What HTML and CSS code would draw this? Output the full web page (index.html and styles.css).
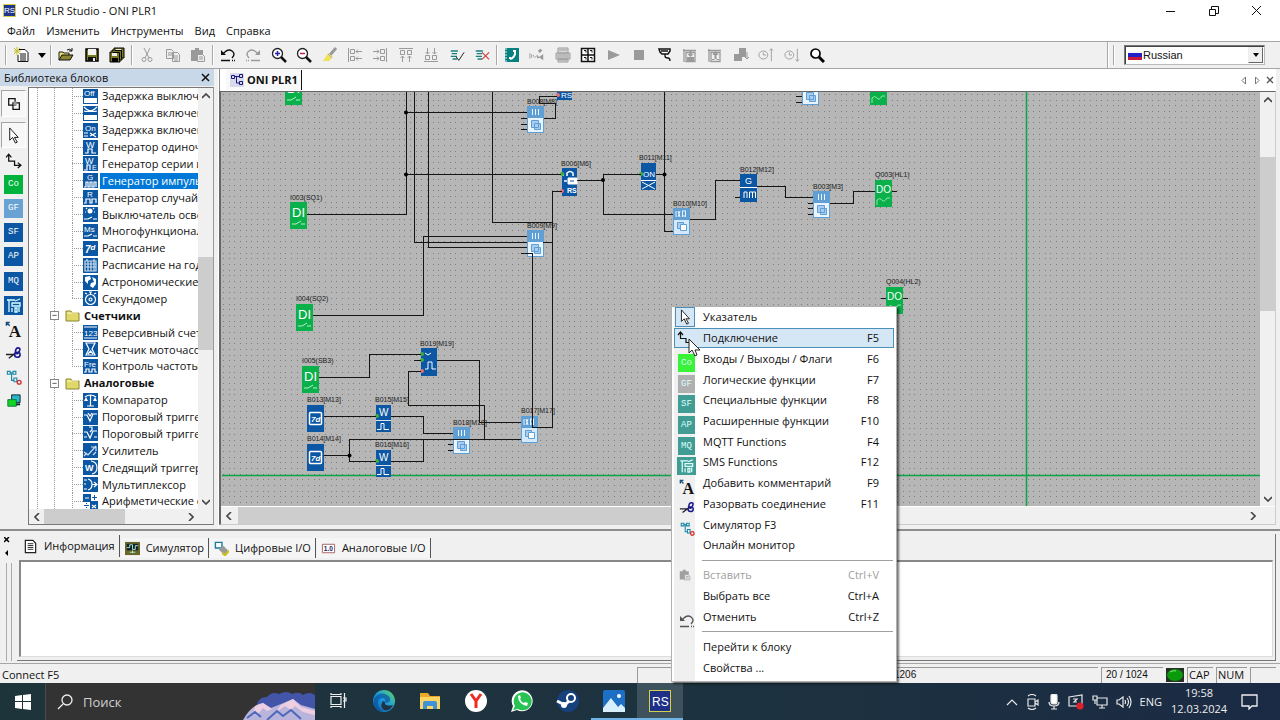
FILE: index.html
```html
<!DOCTYPE html>
<html lang="ru">
<head>
<meta charset="utf-8">
<title>ONI PLR Studio - ONI PLR1</title>
<link rel="stylesheet" href="styles.css">
</head>
<body>
<svg class="defs" aria-hidden="true">
  <defs>
    <pattern id="grid" width="17" height="17" patternUnits="userSpaceOnUse">
      <path d="M2 2h1v1h-1zM8 2h1v1h-1zM13 2h1v1h-1zM2 8h1v1h-1zM8 8h1v1h-1zM13 8h1v1h-1zM2 13h1v1h-1zM8 13h1v1h-1zM13 13h1v1h-1z" fill="#7c7c7c"/>
    </pattern>
    <linearGradient id="edge" x1="0" y1="1" x2="1" y2="0"><stop offset="0" stop-color="#0c59a4"/><stop offset=".5" stop-color="#1a9be0"/><stop offset="1" stop-color="#63d85c"/></linearGradient>
    <symbol id="b-di" viewBox="0 0 17 27"><rect width="17" height="27" fill="#0ab04a"/><text x="2" y="15" font-size="13" fill="#fff">DI</text><path d="M2 22h4l5-3M11 22h4" stroke="#b9f0c8" fill="none"/></symbol>
    <symbol id="b-do" viewBox="0 0 17 27"><rect width="17" height="27" fill="#0ab04a"/><text x="1" y="13" font-size="10" fill="#fff">DO</text><path d="M2 25v-5q3-3 5 0t5-2h3" stroke="#8fe6a8" fill="none"/></symbol>
    <symbol id="b-and" viewBox="0 0 17 27"><rect width="17" height="27" fill="#5f9fd4"/><path d="M5.500 3v6M8.500 3v6M11.500 3v6" stroke="#e8f4ff"/><rect x="1" y="12" width="15" height="14" fill="#eaf4ff"/><path d="M4.500 14.500h7v7h-7zM7.500 17.500h6v6h-6z" fill="#a9cdf2" stroke="#5f9fd4"/></symbol>
    <symbol id="b-xor" viewBox="0 0 17 27"><rect width="17" height="27" fill="#5f9fd4"/><path d="M3 3v6M5 3l2 6M7 3l-2 6M9.500 3v6M12.500 3v6M9 3h4M9 8h4" stroke="#e8f4ff" fill="none"/><rect x="1" y="12" width="15" height="14" fill="#d5e9fd"/><path d="M4.500 14.500h6v6h-6z" fill="#a9cdf2" stroke="#5f9fd4"/><path d="M7.500 16.500h6v6h-6z" fill="#fff" stroke="#5f9fd4"/></symbol>
    <symbol id="b-day" viewBox="0 0 17 27"><rect width="17" height="27" fill="#0b57a4"/><rect x="2.500" y="7.500" width="12" height="12" rx="1" fill="none" stroke="#fff" stroke-width="1.500"/><text x="4" y="17" font-size="8" font-style="italic" font-weight="bold" fill="#fff">7d</text></symbol>
    <symbol id="b-pulse" viewBox="0 0 15 27"><rect width="15" height="27" fill="#0b57a4"/><text x="3" y="11" font-size="10" fill="#fff">W</text><path d="M0 15.500h15" stroke="#d9e6f2"/><path d="M1 24.500h4v-6h3v6h5" stroke="#fff" fill="none"/></symbol>

    <symbol id="t-new" viewBox="0 0 16 16"><path d="M5 2.500h6l3 3v9H4V8" fill="#fff" stroke="#111"/><path d="M6 7h6M6 9h6M6 11h6M6 13h6" stroke="#111"/><path d="M0 1l6 6M6 1L0 7M3 0v8M0 4h7" stroke="#c5c030"/></symbol>
    <symbol id="t-open" viewBox="0 0 16 16"><path d="M1 13V5h4l1 1h5v2" fill="#e6dd70" stroke="#222"/><path d="M1 13l3-5h11l-3 5z" fill="#8b8530" stroke="#111"/><path d="M9 3q3-2 5 1M14 1v3h-3" fill="none" stroke="#111"/></symbol>
    <symbol id="t-save" viewBox="0 0 16 16"><path d="M2 2h12v12H2z" fill="#7a7a22" stroke="#000" stroke-width="1.500"/><path d="M4 2h8v6H4z" fill="#f3f3f3"/><path d="M4 10h8v4H4z" fill="#111"/><path d="M9 11h2v3H9z" fill="#eee"/></symbol>
    <symbol id="t-all" viewBox="0 0 16 16"><path d="M5 1h10v10h-2v2h-2v2H1V5h2V3h2z" fill="#7a7a22" stroke="#000"/><path d="M5.500 3.500h7v8M3.500 5.500h7v8" stroke="#000" fill="none"/><path d="M3 6h5v3H3zM7 2h5v1H7z" fill="#eee"/><path d="M3 11h6v4H3z"/></symbol>
    <symbol id="t-cut" viewBox="0 0 16 16"><path d="M5 1l5 10M11 1L6 11" stroke="currentColor" fill="none"/><circle cx="5" cy="12.500" r="2" fill="none" stroke="currentColor"/><circle cx="11" cy="12.500" r="2" fill="none" stroke="currentColor"/></symbol>
    <symbol id="t-copy" viewBox="0 0 16 16"><path d="M1.500 2.500h5l2 2v7h-7zM7.500 5.500h5l2 2v7h-7z" fill="#eee" stroke="currentColor"/><path d="M3 6h4M3 8h4M9 9h4M9 11h4M9 13h4" stroke="currentColor"/></symbol>
    <symbol id="t-paste" viewBox="0 0 16 16"><path d="M1 3h12v11H1z" fill="currentColor"/><path d="M5 1h4v3H5z" fill="currentColor"/><path d="M7.500 7.500h5l2 2v5h-7z" fill="#eee" stroke="currentColor"/><path d="M9 10h4M9 12h4" stroke="currentColor"/></symbol>
    <symbol id="t-undo" viewBox="0 0 16 16"><path d="M3 7q5-6 9-3 4 3 0 7" fill="none" stroke="currentColor" stroke-width="1.400"/><path d="M1 3v5h5z" fill="currentColor"/><path d="M1 13.500h9M12 13.500h1M14 13.500h1" stroke="currentColor" stroke-width="1.500"/></symbol>
    <symbol id="t-zoom" viewBox="0 0 16 16"><circle cx="6.500" cy="6.500" r="5" fill="#fff" stroke="#222" stroke-width="1.300"/><path d="M10 10l5 5" stroke="#111" stroke-width="2.500"/></symbol>
    <symbol id="t-brush" viewBox="0 0 16 16"><path d="M14 1L8 8" stroke="#999" stroke-width="3"/><path d="M6 6l5 4-4 4H1z" fill="#f1e25a"/><path d="M6 7l4 4" stroke="#aaa"/></symbol>
    <symbol id="t-al" viewBox="0 0 16 16"><path d="M1.500 1v14M3.500 2.500h4v4h-4zM3.500 9.500h4v4h-4zM9 4.500h6M9 11.500h6M11 2.500l-2 2 2 2M11 9.500l-2 2 2 2" fill="none" stroke="currentColor"/></symbol>
    <symbol id="t-chk" viewBox="0 0 16 16"><path d="M1 3.500h8M2 6.500h6M1 9.500h7M3 12.500h5" stroke="#16807c" stroke-width="1.500"/></symbol>
    <symbol id="t-phone" viewBox="0 0 16 16"><path d="M1 1h14v14H1z" fill="#078080"/><path d="M1 2h2M1 5h2M1 8h2M1 11h2M1 14h2" stroke="#eee"/><path d="M11 3v4q-1 4-5 5M9 4h2M6 12v-2" fill="none" stroke="#fff" stroke-width="2"/></symbol>
    <symbol id="t-sat" viewBox="0 0 18 16"><path d="M1 6v6M3 7v4M5 8v2M6 11l4-3" stroke="currentColor"/><path d="M10 3l3-2 2 2-3 3zM9 9l3 1 4-3v7l-4-3-3 1z" fill="currentColor"/></symbol>
    <symbol id="t-print" viewBox="0 0 16 16"><path d="M3 1h10v5H3zM1 6h14v6H1zM3 12h10v3H3z" fill="#ddd" stroke="currentColor"/><path d="M4 3h8M2 8h12M2 10h12M4 13h8" stroke="currentColor"/></symbol>
    <symbol id="t-grid" viewBox="0 0 16 16"><path d="M1.500 1.500h13v13h-13zM8 1v14M1 8h14" fill="#fff" stroke="#111" stroke-width="1.500"/><path d="M4 3.500h2v2M10 3.500h2v2M4 10.500h2v2M10 10.500h2v2" fill="none" stroke="#111"/></symbol>
    <symbol id="t-usb" viewBox="0 0 16 16"><path d="M2 2h11v2l-2 3H5L3 5z" fill="#fff" stroke="#111" stroke-width="1.500"/><path d="M4 4h7M8 7v2q0 2 3 2 2 0 2 3" fill="none" stroke="#111" stroke-width="1.300"/></symbol>
    <symbol id="t-down" viewBox="0 0 16 16"><path d="M2 2v13M1 3.500h13M4 5.500h9v9H4z" fill="none" stroke="currentColor" stroke-width="1.300"/><path d="M5 14v-4h7v4zM7.500 4h2v3h2l-3 3-3-3h2z" fill="currentColor"/></symbol>
    <symbol id="t-up" viewBox="0 0 16 16"><path d="M2 2v13M1 3.500h13M4 5.500h9v9H4z" fill="none" stroke="currentColor" stroke-width="1.300"/><path d="M7.500 13h2V8h2l-3-4-3 4h2zM5 12h7v1H5z" fill="currentColor"/></symbol>
    <symbol id="t-dev" viewBox="0 0 16 16"><path d="M6 1h7v9H6zM1 7h8v7H1z" fill="currentColor"/><path d="M14 5v7M12 10l2 2 2-2" fill="none" stroke="currentColor"/></symbol>
    <symbol id="t-clk" viewBox="0 0 18 16"><ellipse cx="6" cy="8" rx="5" ry="4.500" fill="none" stroke="currentColor"/><path d="M6 5v3h3" fill="none" stroke="currentColor"/></symbol>
    <symbol id="t-find" viewBox="0 0 16 16"><circle cx="6.500" cy="6.500" r="4.500" fill="#fff" stroke="#000" stroke-width="1.700"/><path d="M10 10l5 5" stroke="#000" stroke-width="3"/></symbol>

    <symbol id="p-arrow" viewBox="0 0 16 18"><path d="M4 1v13l3-3 3 6 2-1-3-5h4z" fill="#fff" stroke="#111"/></symbol>
    <symbol id="p-link" viewBox="0 0 16 16"><path d="M3.500 9V2.500M1 5l2.500-3L6 5M3 8.500h6v4h6M12 10l3 2.500-3 2.500" fill="none" stroke="#111" stroke-width="1.200"/></symbol>
    <symbol id="p-sms" viewBox="0 0 19 19"><path d="M3 4h8M5 4v12M8 7h8v3H8zM8 12v4M11 12h2v4h-2zM15 11v5M11 5l5-2" fill="none" stroke="#dff" stroke-width="1.300"/></symbol>
    <symbol id="p-text" viewBox="0 0 18 18"><path d="M1.500 5V1.500H5M1.500 1.500L5 5" fill="none" stroke="#1b4f80" stroke-width="1.500"/><text class="serif" x="4" y="17" font-size="18" fill="#111">A</text></symbol>
    <symbol id="p-cut" viewBox="0 0 18 16"><path d="M1 9h10M4 13l8-6" stroke="#222" stroke-width="1.500"/><path d="M11 7q0-5 3-5t1 4-4 1q5-1 5 2t-3 3-3-4" fill="none" stroke="#191990" stroke-width="1.700"/></symbol>
    <symbol id="p-sim" viewBox="0 0 18 18"><path d="M2.500 2.500h3v3h-3zM8.500 2.500h3v3h-3zM5 4h4M7 4v8h3M9.500 9.500h3v4h-3z" fill="none" stroke="#1886a8" stroke-width="1.200"/><circle cx="15" cy="14" r="2" fill="none" stroke="#d13030" stroke-width="1.500"/></symbol>
    <symbol id="folder" viewBox="0 0 15 13"><path d="M1 12V2h5l1 2h7v8z" fill="#e0d868" stroke="#8d8630"/><path d="M2 4h11" stroke="#fffbc0"/></symbol>
    <symbol id="i-doc" viewBox="0 0 16 16"><path d="M2.500 1.500h8l3 3v10h-11z" fill="#fff" stroke="#222" stroke-width="1.300"/><path d="M5 5h6M5 7h6M5 9h6M5 11h6" stroke="#222"/></symbol>
  </defs>
</svg>

<header class="title"><svg class="logo" viewBox="0 0 13 13"><rect width="13" height="13" fill="#d6cf4a"/><rect x="1" y="1" width="11" height="11" fill="#20368c"/><text x="1" y="9" font-size="8" fill="#fff">RS</text></svg><span class="grow">ONI PLR Studio - ONI PLR1</span>
  <button class="win" aria-label="Свернуть"><svg width="10" height="10"><path d="M0 5.500h9" stroke="#111"/></svg></button>
  <button class="win" aria-label="Развернуть"><svg width="10" height="10"><path d="M.5 3.500h6v6h-6zM2.500 3V.5h7v7H7" fill="none" stroke="#111"/></svg></button>
  <button class="win" aria-label="Закрыть"><svg width="10" height="10"><path d="M0 0l9 9M9 0L0 9" stroke="#111"/></svg></button>
</header>
<nav class="menubar"><button>Файл</button><button>Изменить</button><button>Инструменты</button><button>Вид</button><button>Справка</button></nav>

<div class="toolbar">
  <span class="sep"></span>
  <div class="tools g0"><button aria-label="Создать"><svg><use href="#t-new"/></svg></button><button class="caret" aria-label="Список"><svg viewBox="0 0 16 16"><path d="M4 6h8l-4 5z"/></svg></button></div><span class="sep"></span>
  <div class="tools g1"><button aria-label="Открыть"><svg><use href="#t-open"/></svg></button><button aria-label="Сохранить"><svg><use href="#t-save"/></svg></button><button aria-label="Сохранить все"><svg><use href="#t-all"/></svg></button></div><span class="sep"></span>
  <div class="tools g1 off"><button aria-label="Вырезать"><svg><use href="#t-cut"/></svg></button><button aria-label="Копировать"><svg><use href="#t-copy"/></svg></button><button aria-label="Вставить"><svg><use href="#t-paste"/></svg></button></div><span class="sep"></span>
  <div class="tools g2 off">
    <button class="on" aria-label="Отменить"><svg><use href="#t-undo"/></svg></button>
    <button aria-label="Повторить"><svg viewBox="0 0 16 16"><use href="#t-undo" transform="matrix(-1 0 0 1 16 0)"/></svg></button>
    <button aria-label="Увеличить"><svg viewBox="0 0 16 16"><use href="#t-zoom"/><path d="M4 6.500h5M6.500 4v5" stroke="#2424b0" stroke-width="1.500"/></svg></button>
    <button aria-label="Уменьшить"><svg viewBox="0 0 16 16"><use href="#t-zoom"/><path d="M4 6.500h5" stroke="#c02050" stroke-width="1.500"/></svg></button>
    <button aria-label="Кисть"><svg><use href="#t-brush"/></svg></button>
    <button aria-label="По левому краю"><svg><use href="#t-al"/></svg></button>
    <button aria-label="По правому краю"><svg viewBox="0 0 16 16"><use href="#t-al" transform="matrix(-1 0 0 1 16 0)"/></svg></button>
    <button aria-label="По верхнему краю"><svg viewBox="0 0 16 16"><use href="#t-al" transform="matrix(0 1 1 0 0 0)"/></svg></button>
    <button aria-label="По нижнему краю"><svg viewBox="0 0 16 16"><use href="#t-al" transform="matrix(0 -1 1 0 0 16)"/></svg></button>
    <button aria-label="Проверить"><svg viewBox="0 0 18 16"><use href="#t-chk"/><path d="M8 10l3 4 6-9" fill="none" stroke="#111"/></svg></button>
    <button aria-label="Очистить"><svg viewBox="0 0 18 16"><use href="#t-chk"/><path d="M9 5l8 8M17 5l-8 8" stroke="#d04040" stroke-width="1.300"/></svg></button>
  </div><span class="sep"></span>
  <div class="tools g3 off">
    <button aria-label="Телефонная книга"><svg><use href="#t-phone"/></svg></button>
    <button aria-label="Связь"><svg><use href="#t-sat"/></svg></button>
    <button aria-label="Печать"><svg><use href="#t-print"/></svg></button>
    <button aria-label="Сетка"><svg><use href="#t-grid"/></svg></button>
    <button aria-label="Старт"><svg viewBox="0 0 16 16"><path d="M2 3l12 5-12 5z" fill="currentColor"/></svg></button>
    <button aria-label="Стоп"><svg viewBox="0 0 16 16"><path d="M3 3h10v10H3z" fill="currentColor"/></svg></button>
    <button aria-label="Подключить"><svg><use href="#t-usb"/></svg></button>
    <button aria-label="Загрузить"><svg><use href="#t-down"/></svg></button>
    <button aria-label="Считать"><svg><use href="#t-up"/></svg></button>
    <button aria-label="Устройства"><svg><use href="#t-dev"/></svg></button>
    <button aria-label="Установить время"><svg viewBox="0 0 18 16"><use href="#t-clk" width="18" height="16"/><path d="M15 15V1M13 3l2-2 2 2" fill="none" stroke="currentColor"/></svg></button>
    <button aria-label="Прочитать время"><svg viewBox="0 0 18 16"><use href="#t-clk" width="18" height="16"/><path d="M15 1v14M13 13l2 2 2-2" fill="none" stroke="currentColor"/></svg></button>
    <button aria-label="Найти"><svg><use href="#t-find"/></svg></button>
  </div>
  <span class="grow"></span><span class="sep full"></span><span class="sep"></span>
  <label class="lang"><svg width="14" height="9"><path d="M0 0h14v3H0z" fill="#f5f5f5"/><path d="M0 2h14v4H0z" fill="#2320c8"/><path d="M0 6h14v3H0z" fill="#c81a3a"/></svg><select aria-label="Язык"><option>Russian</option></select><b aria-hidden="true"></b></label>
</div>

<main class="work">
  <aside class="library">
    <div class="libhead"><span class="grow">Библиотека блоков</span><button aria-label="Закрыть"><svg width="9" height="9"><path d="M1 1l7 7M8 1L1 8" stroke="#111" stroke-width="1.500"/></svg></button></div>
    <div class="libbody">
      <div class="palette">
        <button class="first" aria-label="Блоки"><svg viewBox="0 0 16 16"><path d="M3.500 3.500h6v6h-6zM7.500 7.500h6v6h-6z" fill="none" stroke="#111" stroke-width="1.200"/><path d="M8 6h3v4H8z" fill="#999"/></svg></button>
        <div class="ptools">
          <button class="pressed" aria-label="Указатель"><svg><use href="#p-arrow"/></svg></button>
          <button aria-label="Подключение"><svg><use href="#p-link"/></svg></button>
          <button><span class="sq co">Co</span></button>
          <button><span class="sq gf">GF</span></button>
          <button><span class="sq">SF</span></button>
          <button><span class="sq">AP</span></button>
          <button><span class="sq">MQ</span></button>
          <button aria-label="SMS"><span class="sq"><svg><use href="#p-sms"/></svg></span></button>
          <button aria-label="Комментарий"><svg><use href="#p-text"/></svg></button>
          <button aria-label="Разорвать"><svg><use href="#p-cut"/></svg></button>
          <button aria-label="Симулятор"><svg><use href="#p-sim"/></svg></button>
          <button aria-label="Монитор"><svg viewBox="0 0 18 18"><path d="M7 2h9v8H7z" fill="#28b8c8" stroke="#123"/><path d="M3 7h9v7H3z" fill="#10d820" stroke="#174"/><path d="M12 12h4" stroke="#123" stroke-width="2"/></svg></button>
        </div>
      </div>
      <div class="treebox">
        <div class="treerow">
          <ul class="tree" role="tree">
            <li role="treeitem"><i></i><svg viewBox="0 0 15 15"><text x="1" y="7" font-size="8">Off</text><path d="M1 9h13v5H1z" fill="#fff"/></svg><span>Задержка выключ</span></li>
            <li role="treeitem"><i></i><svg viewBox="0 0 15 15"><path d="M1 1q6 6 13 4M1 5q7 2 13-4" class="w"/><path d="M1 9h13v5H1z" fill="#fff"/></svg><span>Задержка включен</span></li>
            <li role="treeitem"><i></i><svg viewBox="0 0 15 15"><text x="2" y="8" font-size="8">On</text><path d="M1 10h4M1 13h4M7 10l6 4M7 13l6-3" class="w"/></svg><span>Задержка включен</span></li>
            <li role="treeitem"><i></i><svg viewBox="0 0 15 15"><text x="3" y="8" font-size="9">W</text><path d="M2 13h3v-4h4v4h4" class="w"/></svg><span>Генератор одиноч</span></li>
            <li role="treeitem"><i></i><svg viewBox="0 0 15 15"><text x="2" y="8" font-size="9">W</text><path d="M1 14h3v-5h3v5" class="w"/><text x="9" y="14" font-size="7">E</text></svg><span>Генератор серии и</span></li>
            <li role="treeitem" aria-selected="true"><i></i><svg viewBox="0 0 15 15"><text x="4" y="7" font-size="8">G</text><path d="M1 14h2V9h2v5h2V9h2v5h2V9h2v5" class="w"/></svg><span>Генератор импуль</span></li>
            <li role="treeitem"><i></i><svg viewBox="0 0 15 15"><text x="4" y="7" font-size="8">R</text><path d="M1 13h2V9h4v4h2V9h4v4" class="w"/></svg><span>Генератор случайн</span></li>
            <li role="treeitem"><i></i><svg viewBox="0 0 15 15"><circle cx="7" cy="4" r="2.500" fill="#fff"/><path d="M3 1l1 1M11 1l-1 1M2 5h1M11 5h1M1 12h4l4-2M10 12h4" class="w"/></svg><span>Выключатель осве</span></li>
            <li role="treeitem"><i></i><svg viewBox="0 0 15 15"><text x="1" y="8" font-size="8">Ms</text><path d="M1 12h4l4-2M10 12h4" class="w"/></svg><span>Многофункционал</span></li>
            <li role="treeitem"><i></i><svg viewBox="0 0 15 15"><text x="2" y="12" font-size="10" font-style="italic" font-weight="bold">7<tspan dy="-3" font-size="8">d</tspan></text></svg><span>Расписание</span></li>
            <li role="treeitem"><i></i><svg viewBox="0 0 15 15"><path d="M2 3h11v10H2zM2 6h11M2 9h11M5 3v10M8 3v10M11 3v10M4 1v2M11 1v2" class="w" opacity=".8"/></svg><span>Расписание на год</span></li>
            <li role="treeitem"><i></i><svg viewBox="0 0 15 15"><path d="M2 2l5-1 1 3-3 2v3L2 6zM9 2l4 2v5l-3 4-3-2 1-3 3-1z" fill="#fff"/></svg><span>Астрономические</span></li>
            <li role="treeitem"><i class="end"></i><svg viewBox="0 0 15 15"><circle cx="7.500" cy="8.500" r="5" class="w"/><circle cx="7.500" cy="8.500" r="1.500" class="w"/><path d="M6 1h3M7.500 1v3M2 2l2 1M13 2l-2 1" class="w"/></svg><span>Секундомер</span></li>
            <li role="treeitem" class="dir"><em>−</em><svg><use href="#folder"/></svg><span>Счетчики</span></li>
            <li role="treeitem"><i></i><svg viewBox="0 0 15 15"><path d="M1 2h13M1 13h13" class="w"/><text x="1" y="11" font-size="8">123</text></svg><span>Реверсивный счет</span></li>
            <li role="treeitem"><i></i><svg viewBox="0 0 15 15"><path d="M3 1h9L9 7l3 6H3l3-6zM5 12l2.500-3 2.500 3" class="w"/></svg><span>Счетчик моточасо</span></li>
            <li role="treeitem"><i class="end"></i><svg viewBox="0 0 15 15"><text x="1" y="8" font-size="8">Fre</text><path d="M1 13h2v-3h3v3h3v-3h3v3h2" class="w"/></svg><span>Контроль частоты</span></li>
            <li role="treeitem" class="dir"><em>−</em><svg><use href="#folder"/></svg><span>Аналоговые</span></li>
            <li role="treeitem"><i></i><svg viewBox="0 0 15 15"><path d="M2 4q5-4 11 0M7.500 2v11M4 13h7" class="w"/><path d="M1 8l2-4 2 4zM10 8l2-4 2 4z" fill="#fff"/></svg><span>Компаратор</span></li>
            <li role="treeitem"><i></i><svg viewBox="0 0 15 15"><path d="M1 5h3l3 6 3-7h4M5 3l2 3 2-3" class="w"/></svg><span>Пороговый тригге</span></li>
            <li role="treeitem"><i></i><svg viewBox="0 0 15 15"><path d="M1 6h3l3 6 3-7h4M1 11h3M11 11h3M6 1h3v3l-2 2" class="w"/></svg><span>Пороговый тригге</span></li>
            <li role="treeitem"><i></i><svg viewBox="0 0 15 15"><path d="M1 9l4 3 8-9M8 4h5v4M1 13l3-3M10 12l3-3" class="w" opacity=".8"/></svg><span>Усилитель</span></li>
            <li role="treeitem"><i></i><svg viewBox="0 0 15 15"><text x="2" y="11" font-size="9" font-weight="bold">W</text><path d="M8 1q6 1 6 6.500T9 14" class="w"/></svg><span>Следящий триггер</span></li>
            <li role="treeitem"><i></i><svg viewBox="0 0 15 15"><path d="M1 3h3M1 12h3M1 7h2M5 2q4 1 4 5.500T5 13M9 7.500h5M11 5l3 2.500-3 2.500" class="w"/></svg><span>Мультиплексор</span></li>
            <li role="treeitem"><i></i><svg viewBox="0 0 15 15"><path d="M8 0h7v7H8zM0 8h7v7H0z" fill="#fff"/><path d="M2 4h4M9 11l4 3M13 11l-4 3" class="w"/><path d="M9 3.500h5M11.500 1v5M1 11.500h5M3.500 9v1M3.500 13v1" stroke="#0b57a4"/></svg><span>Арифметические с</span></li>
          </ul>
          <div class="vbar"><button aria-label="Вверх"><svg width="8" height="6"><path d="M0 5l4-4 4 4" class="chev"/></svg></button><div class="track tv"><div></div></div><button aria-label="Вниз"><svg width="8" height="6"><path d="M0 1l4 4 4-4" class="chev"/></svg></button></div>
        </div>
        <div class="hbar"><button aria-label="Влево"><svg width="6" height="8"><path d="M5 0L1 4l4 4" class="chev"/></svg></button><div class="track th"><div></div></div><button aria-label="Вправо"><svg width="6" height="8"><path d="M1 0l4 4-4 4" class="chev"/></svg></button><span class="corner"></span></div>
      </div>
    </div>
  </aside>

  <section class="doc">
    <div class="doctabs"><button class="doctab"><svg viewBox="0 0 14 14"><rect width="14" height="14" fill="#d9d9ec"/><path d="M1.500 2.500h3v3h-3zM9.500 1.500h3v3h-3zM9.500 8.500h3v3h-3zM5 3.500h4M6.500 4v6H9" fill="none" stroke="#15157a"/></svg>ONI PLR1</button><span class="grow"></span>
      <button class="nav" aria-label="Назад"><svg width="6" height="9"><path d="M4.500 1v7L1 4.500z" fill="none" stroke="#777"/></svg></button><button class="nav" aria-label="Вперед"><svg width="6" height="9"><path d="M1.500 1v7L5 4.500z" fill="none" stroke="#777"/></svg></button><button class="nav" aria-label="Закрыть"><svg width="8" height="8"><path d="M1 1l6 6M7 1L1 7" stroke="#555" stroke-width="1.300"/></svg></button></div>
    <div class="docbody">
      <div class="view">
        <svg class="canvas" font-family="Liberation Sans, Arial, sans-serif">
          <rect width="100%" height="100%" fill="#b6b6b6"/><rect width="100%" height="100%" fill="url(#grid)" shape-rendering="crispEdges"/>
          <g transform="translate(-221 -92)">
            <path d="M1026.500 92V1200M222 475.500H2400" stroke="#0aa545" stroke-width="1.500"/>
            <g>
              <use href="#b-di" x="285" y="78" width="17" height="27"/><use href="#b-di" x="290" y="202" width="17" height="27"/><use href="#b-di" x="296" y="304" width="17" height="27"/><use href="#b-di" x="302" y="366" width="17" height="27"/>
              <use href="#b-do" x="870" y="78" width="17" height="27"/><use href="#b-do" x="875" y="180" width="17" height="27"/><use href="#b-do" x="886" y="287" width="17" height="27"/>
              <use href="#b-and" x="527" y="106" width="17" height="27"/><use href="#b-and" x="527" y="230" width="17" height="27"/><use href="#b-and" x="802" y="78" width="17" height="27"/><use href="#b-and" x="813" y="191" width="17" height="27"/><use href="#b-and" x="453" y="427" width="17" height="27"/>
              <use href="#b-xor" x="673" y="208" width="17" height="27"/><use href="#b-xor" x="521" y="416" width="17" height="27"/>
              <use href="#b-day" x="307" y="405" width="17" height="27"/><use href="#b-day" x="307" y="444" width="17" height="27"/>
              <use href="#b-pulse" x="376" y="405" width="15" height="27"/><use href="#b-pulse" x="376" y="450" width="15" height="27"/>
              <g fill="#0b57a4"><rect x="557" y="72" width="15" height="28"/><rect x="562" y="168" width="15" height="28"/><rect x="641" y="163" width="15" height="27"/><rect x="740" y="174" width="17" height="28"/><rect x="421" y="348" width="16" height="28"/></g>
              <g fill="#fff" font-size="8"><text x="561" y="98">RS</text><text x="567" y="193" font-size="7" font-weight="bold">RS</text><text x="643" y="177">ON</text><text x="745" y="184" font-size="9">G</text></g>
              <g fill="none" stroke="#fff"><path d="M563 173v3M567 176v-3q3-3 6 0v3M564 181h3" stroke-width="1.500"/><path d="M568 178h9v6h-9z" fill="#fff"/><path d="M570 181h4" stroke="#0b57a4"/><path d="M641 180.500h15M642 182l13 7M655 182l-13 7M740 187.500h17M744 198v-6h3v6M749.500 198v-6h3v6M752.500 192h3v6M425 369h3v-7h4v7h4M425 353l3 2 3-2"/></g>
              <g fill="#3fae3f"><circle cx="562" cy="174" r="2"/><circle cx="641" cy="174" r="2"/><circle cx="422" cy="354" r="2"/><circle cx="422" cy="360" r="2"/><circle cx="377" cy="416" r="2"/><circle cx="377" cy="461" r="2"/></g>
              <g fill="#e07078"><circle cx="558" cy="95" r="2"/><circle cx="562" cy="191" r="2"/><circle cx="422" cy="371" r="2"/></g>
            </g>
            <g fill="none" stroke="#151515" shape-rendering="crispEdges">
              <path d="M406.500 92V214.500H307M406 112.500H527M406 174.500H561M414.500 92V242.500H527M428.500 92V247.500H527M313 315.500H423.500V236.500H527"/>
              <path d="M492.500 92V222.500H552.500M562 191.500H552.500V427.500H532.500V253.500H521M543 242.500H552M521 118.500H527M521 124.500H527M521 129.500H527M544 118.500H555.500V103.500H539.500V96.500H557"/>
              <path d="M577 180.500H603.500M641 174.500H603.500V214.500H673M656 174.500H665M664.500 92V231.500H673M690 219.500H715.500V180.500H740M735 197.500H740M757 186.500H785.500V197.500H813M796 96.500H802M796 102.500H802M808 203.500H813M808 208.500H813M808 214.500H813M830 203.500H853.500V191.500H875M892 191.500H897M881 298.500H886M903 298.500H908"/>
              <path d="M319 377.500H369.500V354.500H421M414 360.500H421M421 371.500H408.500V405.500H484.500V439M437 360.500H479.500V422.500H521M324 416.500H376M391 416.500H423.500V433.500H453M324 455.500H349.500M376 461.500H349.500V439.500H521M391 461.500H423.500V439M448 444.500H453M448 450.500H453"/>
            </g>
            <g><circle cx="406" cy="112.500" r="2"/><circle cx="406" cy="174.500" r="2"/><circle cx="603" cy="180" r="2"/><circle cx="664.500" cy="174.500" r="2"/><circle cx="349.500" cy="455.500" r="2"/></g>
            <g class="tags"><text x="290" y="200">I003(SQ1)</text><text x="296" y="301">I004(SQ2)</text><text x="302" y="363">I005(SB3)</text><text x="527" y="104">B008[M8]</text><text x="561" y="166">B006[M6]</text><text x="639" y="160">B011[M11]</text><text x="673" y="206">B010[M10]</text><text x="527" y="228">B009[M9]</text><text x="740" y="172">B012[M12]</text><text x="813" y="189">B003[M3]</text><text x="875" y="177">Q003(HL1)</text><text x="886" y="284">Q004(HL2)</text><text x="420" y="346">B019[M19]</text><text x="307" y="402">B013[M13]</text><text x="375" y="402">B015[M15]</text><text x="307" y="441">B014[M14]</text><text x="375" y="447">B016[M16]</text><text x="453" y="425">B018[M18]</text><text x="521" y="413">B017[M17]</text></g>
          </g>
        </svg>
        <div class="vbar"><button aria-label="Вверх"><svg width="8" height="6"><path d="M0 5l4-4 4 4" class="chev"/></svg></button><div class="track cv"><div></div></div><button aria-label="Вниз"><svg width="8" height="6"><path d="M0 1l4 4 4-4" class="chev"/></svg></button></div>
      </div>
      <div class="hbar"><button aria-label="Влево"><svg width="6" height="8"><path d="M5 0L1 4l4 4" class="chev"/></svg></button><div class="track ch"><div></div></div><button aria-label="Вправо"><svg width="6" height="8"><path d="M1 0l4 4-4 4" class="chev"/></svg></button><span class="corner"></span></div>
    </div>
  </section>
</main>

<section class="output">
  <div class="grip"><button aria-label="Закрыть"><svg width="6" height="6"><path d="M0 0l5 5M5 0L0 5" stroke="#000" stroke-width="1.500"/></svg></button><button aria-label="Свернуть"><svg width="5" height="6"><path d="M4 0v6L1 3z"/></svg></button><span></span></div>
  <div class="outmain">
    <div class="outtabs" role="tablist">
      <button role="tab" aria-selected="true"><svg><use href="#i-doc"/></svg>Информация</button>
      <button role="tab"><svg viewBox="0 0 16 16"><path d="M0 1h16v14H0z" fill="#6b672a"/><path d="M2 3h12v7H2z" fill="#123"/><path d="M2 7h3V4h3v5h3V5h3M5 12h6M8 10v3" fill="none" stroke="#a9ecca"/></svg>Симулятор</button>
      <button role="tab"><svg viewBox="0 0 16 16"><path d="M1.500 1.500h7v6h-7z" fill="#fff" stroke="#1a7aa0" stroke-width="1.500"/><path d="M5 9l5-4 5 5-4 5z" fill="#9a9a9a"/><path d="M9 13l3 2 4-5" fill="none" stroke="#c8c020" stroke-width="2.500"/></svg>Цифровые I/O</button>
      <button role="tab"><svg viewBox="0 0 16 16"><path d="M1.500 3.500h13v9h-13z" fill="#fff" stroke="#a86060"/><text x="3" y="11" font-size="7" font-weight="bold" fill="#1a1a70">1.0</text></svg>Аналоговые I/O</button>
    </div>
    <div class="log"></div>
  </div>
</section>

<footer class="status"><span class="grow">Connect F5</span><span class="cell mem">1206</span><span class="cell cnt">20 / 1024</span><svg class="led" viewBox="0 0 18 14"><path d="M0 0h18v14H0z" fill="#263026"/><ellipse cx="9" cy="7" rx="8" ry="6" fill="#0b9a0b"/><path d="M4 4q3-2 6-1" stroke="#8be08b" fill="none"/></svg><span class="cell cap">CAP</span><span class="cell num">NUM</span><span class="cell scr"></span></footer>

<div class="taskbar">
  <button class="start" aria-label="Пуск"><svg width="16" height="16"><path d="M0 2l7-1v6H0zM8 1l8-1v7H8zM0 8h7v7l-7-1zM8 8h8v8l-8-1z" fill="#fff"/></svg></button>
  <label class="search"><svg width="16" height="16" fill="none" stroke="#eee" stroke-width="1.300"><circle cx="10" cy="6" r="5"/><path d="M6 10l-5 5"/></svg><input type="search" placeholder="Поиск" aria-label="Поиск">
    <svg class="hill" width="72" height="28" viewBox="0 0 72 28"><path d="M14 12q2-7 10-7 5-6 12-3 8-4 13 0 7-3 11 1 6-4 12 0v20H10z" fill="#4355a8"/><path d="M0 28q8-15 20-17l8 5 10-4 12-5 8 6 14 4v11z" fill="#b9b4dc"/><path d="M12 14l8-3 9 6-5 2-4-3-4 5-6 2zM38 13l12-6 8 8 14 4v4l-12-3-8-6-4 4-6-4-10 7z" fill="#eecfe2"/><path d="M24 28l10-9 6 5 8-6 10 9M4 26l8-6 6 5" stroke="#4b69b8" stroke-width="2" fill="none"/></svg></label>
  <div class="apps">
    <button aria-label="Представление задач"><svg width="18" height="18" fill="none" stroke="#eee" stroke-width="1.200"><path d="M2 4.500h10v8H2zM2 1v1.500h10V1M2 16v-1.500h10V16M15.500 1v15M14 6h3v3h-3"/></svg></button>
    <button aria-label="Edge"><svg viewBox="0 0 24 24"><circle cx="12" cy="12" r="11" fill="url(#edge)"/><path d="M2 10q4-7 11-5 6 2 5 7-2 3-5 1 1-4-3-4-5 1-4 7 2 5 7 6Q4 23 2 15z" fill="#0b4f9a" opacity=".65"/><path d="M13 13q-1 5 8 3-3 7-9 5-5-3-1-9z" fill="#1f3340"/></svg></button>
    <button aria-label="Проводник"><svg viewBox="0 0 24 24"><path d="M2 4h8l2 3h10v5H2z" fill="#e8a92b"/><path d="M2 8h20v12H2z" fill="#fcd462"/><path d="M5 20v-6q0-2 2-2h10q2 0 2 2v6h-4v-3H9v3z" fill="#3d93d6"/></svg></button>
    <button aria-label="Яндекс"><svg viewBox="0 0 24 24"><circle cx="12" cy="12" r="11" fill="#fff"/><path d="M7 5l5 7v7M17 5l-5 7" stroke="#f02b22" stroke-width="3" fill="none"/></svg></button>
    <button aria-label="WhatsApp"><svg viewBox="0 0 24 24"><path d="M1 23l2-6a10.500 10.500 0 1 1 4 4z" fill="#fff"/><path d="M3 21l2-4a9 9 0 1 1 3 3z" fill="#27c353"/><path d="M8 7q0 8 9 10l1-3-3-1-1 1q-3-1-4-4l1-1-1-3z" fill="#fff"/></svg></button>
    <button aria-label="Steam"><svg viewBox="0 0 24 24"><circle cx="12" cy="12" r="11" fill="#17417c"/><circle cx="15" cy="9" r="4" fill="none" stroke="#fff" stroke-width="2"/><path d="M1 12l8 4 4-4" stroke="#fff" stroke-width="3" fill="none"/><circle cx="8" cy="16" r="3" fill="#fff"/></svg></button>
    <button class="open" aria-label="Фото"><svg viewBox="0 0 24 24"><rect x="1" y="1" width="22" height="22" rx="2" fill="#1c6fc4"/><path d="M1 19l8-10 7 9 3-3 4 4v4H1z" fill="#d8efff"/><circle cx="17" cy="7" r="2" fill="#fff"/></svg></button>
    <button class="open active" aria-label="ONI PLR Studio"><svg viewBox="0 0 24 24"><rect x="1" y="1" width="22" height="22" fill="#d6cf4a"/><rect x="2" y="2" width="20" height="20" fill="#1d2f86"/><text x="4" y="17" font-size="12" fill="#fff">RS</text></svg></button>
  </div>
  <span class="grow"></span>
  <div class="tray">
    <svg width="12" height="8"><path d="M1 7l5-5 5 5"/></svg>
    <svg width="14" height="16"><path d="M2 5h7v7H2zM9 8l3-2v5l-3-2M2 2q4-3 8 0M2 14q4 3 8 0"/></svg>
    <svg width="12" height="16"><rect x="3" y="0" width="6" height="10" rx="2" fill="#fff"/><path d="M1 8q0 4 5 4t5-4M6 12v3M3 15h6"/></svg>
    <svg width="16" height="16"><path d="M1 3l13-2v11H1zM5 5h4l-3 3h3"/><circle cx="12" cy="12" r="3.500" fill="#e0202c" stroke="none"/></svg>
    <svg width="16" height="14"><path d="M5 3h10v7H5zM10 10v3M7 13h6M1 1h4v4H1zM3 5v4"/></svg>
    <svg width="16" height="14"><path d="M1 5h2l4-3v10L3 9H1zM9 5q1 2 0 4M11 3q3 4 0 8M13 1q4 6 0 12"/></svg>
    <span>ENG</span>
  </div>
  <div class="clock"><span>19:58</span><span>12.03.2024</span></div>
  <button class="note" aria-label="Уведомления"><svg width="17" height="16" fill="none" stroke="#eee" stroke-width="1.300"><path d="M1 1h15v11h-5l-3 3v-3H1z"/></svg></button>
</div>

<div class="popup" role="menu">
  <button role="menuitem"><span class="ic sel"><svg><use href="#p-arrow"/></svg></span><span>Указатель</span></button>
  <button role="menuitem" class="hot"><span class="ic"><svg><use href="#p-link"/></svg></span><span>Подключение</span><kbd>F5</kbd></button>
  <button role="menuitem"><span class="ic"><b class="sq lime">Co</b></span><span>Входы / Выходы / Флаги</span><kbd>F6</kbd></button>
  <button role="menuitem"><span class="ic"><b class="sq gray">GF</b></span><span>Логические функции</span><kbd>F7</kbd></button>
  <button role="menuitem"><span class="ic"><b class="sq teal">SF</b></span><span>Специальные функции</span><kbd>F8</kbd></button>
  <button role="menuitem"><span class="ic"><b class="sq teal">AP</b></span><span>Расширенные функции</span><kbd>F10</kbd></button>
  <button role="menuitem"><span class="ic"><b class="sq teal">MQ</b></span><span>MQTT Functions</span><kbd>F4</kbd></button>
  <button role="menuitem"><span class="ic"><b class="sq teal"><svg><use href="#p-sms"/></svg></b></span><span>SMS Functions</span><kbd>F12</kbd></button>
  <button role="menuitem"><span class="ic low"><svg><use href="#p-text"/></svg></span><span>Добавить комментарий</span><kbd>F9</kbd></button>
  <button role="menuitem"><span class="ic low"><svg><use href="#p-cut"/></svg></span><span>Разорвать соединение</span><kbd>F11</kbd></button>
  <button role="menuitem"><span class="ic low"><svg><use href="#p-sim"/></svg></span><span>Симулятор F3</span></button>
  <button role="menuitem"><span class="ic"></span><span>Онлайн монитор</span></button>
  <hr>
  <button role="menuitem" disabled><span class="ic small"><svg><use href="#t-paste"/></svg></span><span>Вставить</span><kbd>Ctrl+V</kbd></button>
  <button role="menuitem"><span class="ic"></span><span>Выбрать все</span><kbd>Ctrl+A</kbd></button>
  <button role="menuitem"><span class="ic low soft"><svg><use href="#t-undo"/></svg></span><span>Отменить</span><kbd>Ctrl+Z</kbd></button>
  <hr>
  <button role="menuitem"><span class="ic"></span><span>Перейти к блоку</span></button>
  <button role="menuitem"><span class="ic"></span><span>Свойства ...</span></button>
</div>
<svg class="pointer" width="13" height="19"><path d="M1 1v14l3-3 3 6 2-1-2-5h5z" fill="#fff" stroke="#222"/></svg>
</body>
</html>
```
FILE: styles.css
```css
* { box-sizing: border-box; }
body { margin: 0; height: 100vh; display: flex; flex-direction: column; overflow: hidden; background: #f0f0f0; color: #111; font: 11px/16px "Open Sans", "Noto Sans", sans-serif; }
button { font: inherit; color: inherit; background: none; border: 0; margin: 0; padding: 0; display: flex; align-items: center; justify-content: center; }
svg { flex: none; }
svg text { font-family: "Liberation Sans", Arial, sans-serif; }
svg text.serif { font-family: "Liberation Serif", serif; font-weight: bold; }
.defs { position: absolute; width: 0; height: 0; }
.grow { flex: 1; min-width: 0; }

.title { flex: none; height: 21px; display: flex; align-items: center; background: #fff; padding: 0 2px 0 3px; }
.logo { width: 13px; height: 13px; margin-right: 6px; }
.win { width: 43px; height: 19px; }
.menubar { flex: none; height: 20px; display: flex; gap: 11px; padding-left: 7px; background: #fff; }

.toolbar { flex: none; height: 28px; display: flex; align-items: center; padding: 0 15px 0 4px; border-top: 1px solid #a5a5a5; border-bottom: 1px solid #a5a5a5; }
.sep { width: 2px; height: 20px; margin: 0 1px; border-left: 1px solid #a8a8a8; border-right: 1px solid #fff; }
.sep.full { height: 26px; margin-right: 3px; }
.tools { display: flex; color: #111; }
.tools button { flex: 1; height: 24px; }
.tools svg { width: 16px; height: 16px; }
.tools.off { color: #9a9a9a; }
.tools .on { color: #111; }
.g0 { width: 41px; }
.g0 .caret { flex: none; width: 14px; }
.g1 { width: 77px; }
.g2 { width: 280px; }
.g3 { width: 331px; }
.lang { width: 141px; height: 20px; margin-left: 8px; position: relative; display: flex; align-items: center; background: #fff; border: 1px solid #777; border-right-color: #bbb; border-bottom-color: #bbb; box-shadow: inset 1px 1px #444; }
.lang > svg { margin-left: 3px; }
.lang select { appearance: none; flex: 1; height: 16px; border: 0; padding: 0 1px; background: transparent; font: 11px/16px "Liberation Sans", Arial, sans-serif; color: #111; }
.lang b { width: 15px; height: 16px; background: #f0f0f0; border: 1px solid #eee; border-right-color: #666; border-bottom-color: #666; display: flex; align-items: center; justify-content: center; margin-right: 1px; }
.lang b::after { content: ""; border: 3px solid transparent; border-top: 4px solid #000; border-bottom: 0; }

.work { flex: 1; min-height: 0; display: flex; border-bottom: 1px solid #f0f0f0; }
.library { width: 219px; display: flex; flex-direction: column; padding-bottom: 3px; border-right: 1px solid #fff; }
.libhead { height: 17px; display: flex; align-items: center; margin: 0 4px 1px 0; padding: 0 4px; background: #c9d8e8; }
.libbody { flex: 1; min-height: 0; display: flex; padding-right: 4px; }
.palette { width: 28px; padding: 3px 1px 0; }
.palette .first { width: 25px; height: 27px; border: 1px solid #a5a5a5; border-right-color: #fff; border-bottom-color: #fff; margin-bottom: 5px; background: #f7f7f7; }
.palette svg { width: 17px; height: 17px; }
.ptools { height: 292px; display: flex; flex-direction: column; }
.ptools button { flex: 1; width: 25px; }
.pressed { border: 1px solid #a5a5a5; border-right-color: #fff; border-bottom-color: #fff; background: #f7f7f7; }
.sq { width: 19px; height: 19px; background: #0b57a4; color: #fff; font: 9px/19px "Liberation Mono", monospace; text-align: center; display: block; }
.sq svg { width: 19px; height: 19px; display: block; }
.co { background: #00b33c; }
.gf { background: #69a3d3; }
.lime { background: #38f338; }
.gray { background: #b0b0b0; }
.teal { background: #419c94; }

.treebox { flex: 1; min-width: 0; display: flex; flex-direction: column; border: 1px solid #777; border-right-color: #999; background: #fff; }
.treerow { flex: 1; min-height: 0; display: flex; }
.tree { flex: 1; min-width: 0; margin: 0 0 -1px; padding: 0; overflow: hidden; list-style: none; display: flex; flex-direction: column; background: repeating-linear-gradient(#999 0 1px, transparent 1px 2px) 8px 0 / 1px 100% no-repeat, repeating-linear-gradient(#999 0 1px, transparent 1px 2px) 25px 0 / 1px 100% no-repeat; }
.tree li { flex: 1; min-height: 0; display: flex; align-items: center; padding-left: 43px; white-space: nowrap; }
.tree i { width: 11px; height: 100%; background: repeating-linear-gradient(#999 0 1px, transparent 1px 2px) 0 0 / 1px 100% no-repeat, repeating-linear-gradient(90deg, #999 0 1px, transparent 1px 2px) 0 50% / 100% 1px no-repeat; }
.tree .end { background-size: 1px 50%, 100% 1px; }
.tree li > svg { width: 15px; height: 15px; background: #0b57a4; fill: #fff; }
.tree .w { fill: none; stroke: #fff; stroke-width: 1.200px; }
.tree span { flex: 1; min-width: 0; overflow: hidden; margin-left: 2px; padding-left: 2px; line-height: 16px; }
.tree [aria-selected] span { background: #0078d7; color: #fff; }
.tree .dir { padding-left: 21px; font-weight: bold; }
.tree .dir em { width: 9px; height: 9px; margin-right: 6px; border: 1px solid #888; background: #fff; font: 9px/7px "Liberation Sans", sans-serif; text-align: center; }
.tree .dir > svg { background: none; height: 13px; }
.vbar { width: 15px; display: flex; flex-direction: column; background: #f0f0f0; }
.vbar button { height: 15px; }
.hbar { flex: none; height: 15px; display: flex; background: #f0f0f0; }
.hbar button { width: 15px; }
.corner { width: 15px; }
.track { flex: 1; display: flex; }
.vbar .track { flex-direction: column; }
.track div { background: #cdcdcd; }
.tv { padding-top: 154px; }
.tv div { height: 93px; }
.th div { width: 81px; }
.cv { padding-top: 50px; }
.cv div { height: 154px; }
.ch { padding-left: 2px; }
.ch div { width: 54%; }
.chev { fill: none; stroke: #444; stroke-width: 1.600px; }

.doc { flex: 1; min-width: 0; display: flex; flex-direction: column; padding: 0 4px 3px 0; }
.doctabs { flex: none; height: 22px; display: flex; align-items: center; background: #fff; padding-left: 6px; border-left: 1px solid #888; }
.doctab { height: 20px; padding: 0 3px 0 4px; gap: 3px; font-weight: bold; background: #f8f8f8; border-right: 1px solid #111; }
.doctab svg { width: 14px; height: 14px; }
.nav { width: 13px; height: 16px; }
.docbody { flex: 1; min-height: 0; display: flex; flex-direction: column; border: 1px solid #666; border-width: 1px 1px 1px 2px; border-right-color: #ccc; border-bottom-color: #ccc; }
.view { flex: 1; min-height: 0; display: flex; }
.canvas { flex: 1; min-width: 0; height: 100%; display: block; }
.tags { font-size: 7px; fill: #1c1c1c; }
.docbody .hbar { height: 18px; border-top: 1px solid #fff; }

.output { flex: none; height: 134px; display: flex; padding: 3px 4px 2px 2px; border-top: 2px solid #8d8d8d; }
.grip { width: 15px; display: flex; flex-direction: column; align-items: flex-start; gap: 7px; padding: 3px 2px 0; }
.grip span { flex: 1; width: 6px; margin: 0 0 0 2px; border: 1px solid #aaa; border-width: 0 1px; }
.outmain { flex: 1; display: flex; flex-direction: column; border: 1px solid #777; border-width: 0 1px 1px 0; padding: 0 2px 3px; }
.outtabs { display: flex; height: 24px; align-items: flex-end; gap: 1px; }
.outtabs button { height: 20px; gap: 6px; padding: 0 4px; border-right: 1px solid #555; background: #f5f5f5; }
.outtabs [aria-selected] { height: 22px; margin-bottom: 1px; background: #f0f0f0; }
.outtabs svg { width: 15px; height: 15px; }
.log { flex: 1; margin-top: 2px; background: #fff; border: 1px solid #888; border-width: 2px 1px 1px 2px; border-right-color: #ddd; border-bottom-color: #ddd; }

.status { flex: none; height: 20px; display: flex; align-items: center; gap: 3px; padding: 2px 4px 0 2px; border-top: 1px solid #a5a5a5; }
.cell { height: 16px; padding: 0 3px; line-height: 14px; border-left: 1px solid #999; border-top: 1px solid #999; }
.mem { width: 461px; padding-left: 256px; font: 10px/13px "Liberation Sans", sans-serif; white-space: nowrap; }
.cnt { width: 62px; font: 10px/13px "Liberation Sans", sans-serif; padding-left: 4px; }
.led { width: 18px; height: 14px; }
.cap { width: 26px; padding: 0 1px; }
.num { width: 31px; padding: 0 1px; }
.scr { width: 26px; }

.taskbar { flex: none; height: 37px; display: flex; background: linear-gradient(90deg, #1e343b, #1d3240 60%, #1a2a44); color: #eee; }
.start { width: 45px; }
.search { width: 270px; display: flex; align-items: center; padding-left: 11px; background: #333; border-left: 1px solid #4a4a4a; }
.search input { flex: 1; min-width: 0; border: 0; background: none; color: #ddd; padding: 0 0 0 10px; font: 13px/20px "Open Sans", sans-serif; outline: 0; }
.search input::placeholder { color: #d0d0d0; opacity: 1; }
.hill { align-self: flex-end; }
.apps { display: flex; }
.apps button { width: 46px; border-bottom: 2px solid transparent; }
.apps button > svg:not([width]) { width: 24px; height: 24px; }
.apps .open { border-bottom-color: #6fb2e6; }
.apps .active { background: #3d525c; }
.tray { display: flex; align-items: center; gap: 8px; font-size: 11px; }
.tray svg { fill: none; stroke: #e8e8e8; stroke-width: 1.200px; }
.clock { width: 74px; display: flex; flex-direction: column; align-items: center; justify-content: center; font-size: 11px; line-height: 16px; padding-bottom: 2px; }
.note { width: 44px; padding-right: 18px; }

.popup { position: absolute; left: 671px; top: 306px; bottom: 38px; width: 226px; display: flex; flex-direction: column; padding: 0 2px 3px; background: linear-gradient(90deg, #fff 2px, #f0f0f0 2px 23px, #fff 23px); border: 1px solid #b0b0b0; box-shadow: 2px 2px 2px rgba(0, 0, 0, .55); }
.popup button { flex: 2 1 0; min-height: 0; justify-content: flex-start; padding-right: 14px; border: 1px solid transparent; text-align: left; white-space: nowrap; }
.popup button > span:nth-child(2) { flex: 1; }
.popup hr { flex: 1 1 0; width: 191px; margin: 0 0 0 28px; border: 0; background: linear-gradient(#a0a0a0, #a0a0a0) 0 50% / 100% 1px no-repeat; }
.popup .hot { background: #d5e6f5; border-color: #4a90b8; }
.popup button:disabled { color: #a0a0a0; }
.ic { width: 20px; height: 20px; margin-right: 8px; display: flex; align-items: center; justify-content: center; }
.ic svg { width: 16px; height: 16px; }
.ic .sq { margin: 8px 0 0 3px; height: 18px; font-weight: normal; color: #dff; }
.ic .sq svg { width: 19px; height: 18px; }
.ic.low { padding: 8px 0 0 4px; }
.ic.soft { color: #555; }
.ic.small svg { width: 12px; height: 12px; }
.ic.sel { background: #d5e6f5; border: 1px solid #4a90b8; }
kbd { font: inherit; }
.pointer { position: absolute; left: 688px; top: 338px; }
```
